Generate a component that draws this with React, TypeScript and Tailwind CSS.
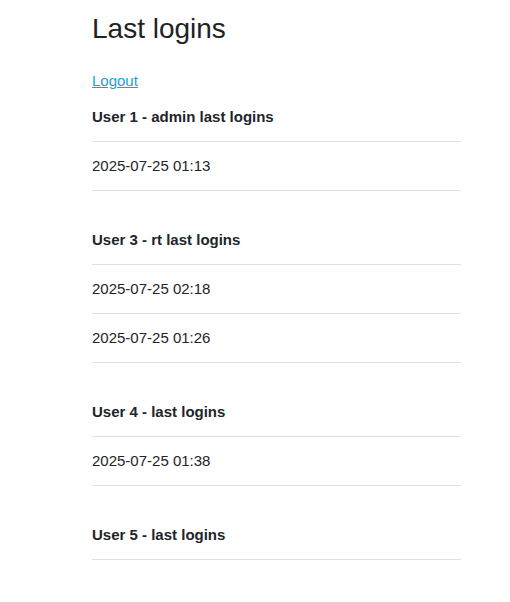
import React from "react";

interface Group {
  id: number;
  title: string;
  logins: string[];
}

const groups: Group[] = [
  { id: 1, title: "User 1 - admin last logins", logins: ["2025-07-25 01:13"] },
  { id: 3, title: "User 3 - rt last logins", logins: ["2025-07-25 02:18", "2025-07-25 01:26"] },
  { id: 4, title: "User 4 - last logins", logins: ["2025-07-25 01:38"] },
  { id: 5, title: "User 5 - last logins", logins: [] },
];

export default function App() {
  return (
    <div className="min-h-[602px] bg-white text-[#212529]" style={{ fontFamily: '"Liberation Sans", Arial, sans-serif' }}>
      <div className="w-[369px] ml-[92px] pt-[12px]">
        <h1 className="text-[28px] leading-[34px] h-[34px] font-normal text-[#222]">Last logins</h1>
        <a href="#" className="block mt-[24px] text-[15px] leading-[22px] w-fit text-[#1ba1d2] underline">
          Logout
        </a>
        <div className="mt-[14px]">
          {groups.map((g) => (
            <div key={g.id} className="mb-[38px]">
              <h5 className="text-[15px] leading-[22px] font-bold mb-[13px]">{g.title}</h5>
              <div className="border-b border-[#dee2e6]">
                {g.logins.map((l) => (
                  <div key={l} className="border-t border-[#dee2e6] h-[49px] flex items-center text-[15px] leading-[22px]">
                    {l}
                  </div>
                ))}
              </div>
            </div>
          ))}
        </div>
      </div>
    </div>
  );
}
